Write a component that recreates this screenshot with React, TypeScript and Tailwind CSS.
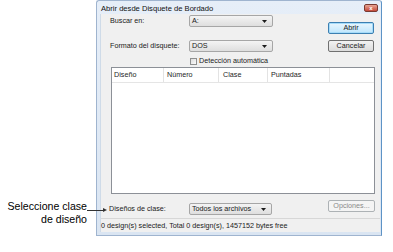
import React from "react";

function Arrow() {
  return (
    <svg width="5" height="3" viewBox="0 0 5 3" className="block">
      <path d="M0 0 H5 L2.5 3 Z" fill="#1b1b1b" />
    </svg>
  );
}

function Combo({ text, w, h }: { text: string; w: string; h: string }) {
  return (
    <div
      className={`${w} ${h} flex items-center justify-between rounded-[2px] border border-[#a6a6a6] bg-gradient-to-b from-[#f4f4f4] to-[#dedede] pl-[2px] pr-[5px]`}
    >
      <span className="leading-none">{text}</span>
      <Arrow />
    </div>
  );
}

export default function App() {
  return (
    <div className="w-[393px] h-[252px] bg-white flex font-['Liberation_Sans',Arial,sans-serif] text-[#1a1a1a] relative">
      {/* Annotation */}
      <div className="w-[96px] shrink-0 pt-[200px] pr-[9px] text-right text-[10.6px] leading-[13px] text-black">
        <div>Seleccione clase</div>
        <div>de diseño</div>
      </div>
      <div className="absolute left-[87px] top-[208px] flex items-center">
        <div className="w-[17px] h-[1px] bg-[#333]" />
        <svg width="4" height="4" viewBox="0 0 4 4" className="block -ml-[1px]">
          <path d="M0 0 L4 2 L0 4 Z" fill="#333" />
        </svg>
      </div>

      {/* Dialog */}
      <div className="w-[286px] h-[236px] border border-[#9fb4cf] border-r-[#5d93c6] bg-gradient-to-b from-[#e6eef8] to-[#dae5f2] rounded-t-[3px] flex flex-col">
        {/* title bar */}
        <div className="h-[13px] flex items-start justify-between pl-[4px] pr-[3px]">
          <span className="text-[7.6px] leading-none mt-[4px] text-[#111]">Abrir desde Disquete de Bordado</span>
          <div className="mt-[3px] w-[14px] h-[8px] rounded-[2px] border border-[#7a3a30] bg-gradient-to-b from-[#e8a493] to-[#c4493a] flex items-center justify-center">
            <span className="text-white text-[6px] leading-none font-bold">x</span>
          </div>
        </div>
        {/* client */}
        <div className="ml-[3px] mr-[1px] w-[280px] h-[218px] bg-[#f0f0f0] border-l border-[#cfdbe8] flex flex-col text-[7.2px]">
          {/* top section */}
          <div className="h-[53px] flex">
            <div className="w-[227px] pl-[9px] flex flex-col">
              <div className="mt-[1px] flex items-center h-[12px]">
                <span className="w-[79px]">Buscar en:</span>
                <Combo text="A:" w="w-[84px]" h="h-[12px]" />
              </div>
              <div className="mt-[13px] flex items-center h-[12px]">
                <span className="w-[79px]">Formato del disquete:</span>
                <Combo text="DOS" w="w-[84px]" h="h-[12px]" />
              </div>
              <div className="mt-[5px] ml-[80px] flex items-center h-[8px]">
                <div className="w-[7px] h-[7px] border border-[#8e8f8f] bg-gradient-to-br from-[#dcdcdc] to-[#fbfbfb]" />
                <span className="ml-[2px] leading-none">Detección automática</span>
              </div>
            </div>
            <div className="flex flex-col">
              <div className="mt-[8px] w-[46px] h-[12px] rounded-[2px] border border-[#3c7fb1] bg-gradient-to-b from-[#eaf6fd] to-[#bee6fd] shadow-[inset_0_0_0_1px_#a6dcfa] flex items-center justify-center leading-none">
                Abrir
              </div>
              <div className="mt-[6px] w-[46px] h-[12px] rounded-[2px] border border-[#707070] bg-gradient-to-b from-[#f2f2f2] to-[#dcdcdc] flex items-center justify-center leading-none">
                Cancelar
              </div>
            </div>
          </div>

          {/* list */}
          <div className="ml-[10px] w-[264px] h-[127px] border border-[#8c9097] bg-white flex flex-col">
            <div className="h-[15px] flex border-b border-[#e5e5e5] text-[#1e1e1e]">
              <div className="w-[52px] border-r border-[#e3e3e3] pl-[2px] flex items-center">Diseño</div>
              <div className="w-[55px] border-r border-[#e3e3e3] pl-[3px] flex items-center">Número</div>
              <div className="w-[49px] border-r border-[#e3e3e3] pl-[4px] flex items-center">Clase</div>
              <div className="w-[62px] border-r border-[#e3e3e3] pl-[3px] flex items-center">Puntadas</div>
              <div className="flex-1" />
            </div>
            <div className="flex-1" />
          </div>

          {/* bottom row */}
          <div className="h-[24px] flex items-start">
            <span className="ml-[8px] w-[80px] mt-[11px] leading-none">Diseños de clase:</span>
            <div className="mt-[9px]">
              <Combo text="Todos los archivos" w="w-[83px]" h="h-[12px]" />
            </div>
            <div className="ml-[56px] mt-[6px] w-[47px] h-[12px] rounded-[2px] border border-[#adb2b5] bg-[#f4f4f4] text-[#8a8a8a] flex items-center justify-center leading-none">
              Opciones...
            </div>
          </div>

          {/* status bar */}
          <div className="flex-1 border-t border-[#d7d7d7] bg-[#f0f0f0] flex items-center leading-none">
            0 design(s) selected, Total 0 design(s), 1457152 bytes free
          </div>
        </div>
      </div>
    </div>
  );
}
